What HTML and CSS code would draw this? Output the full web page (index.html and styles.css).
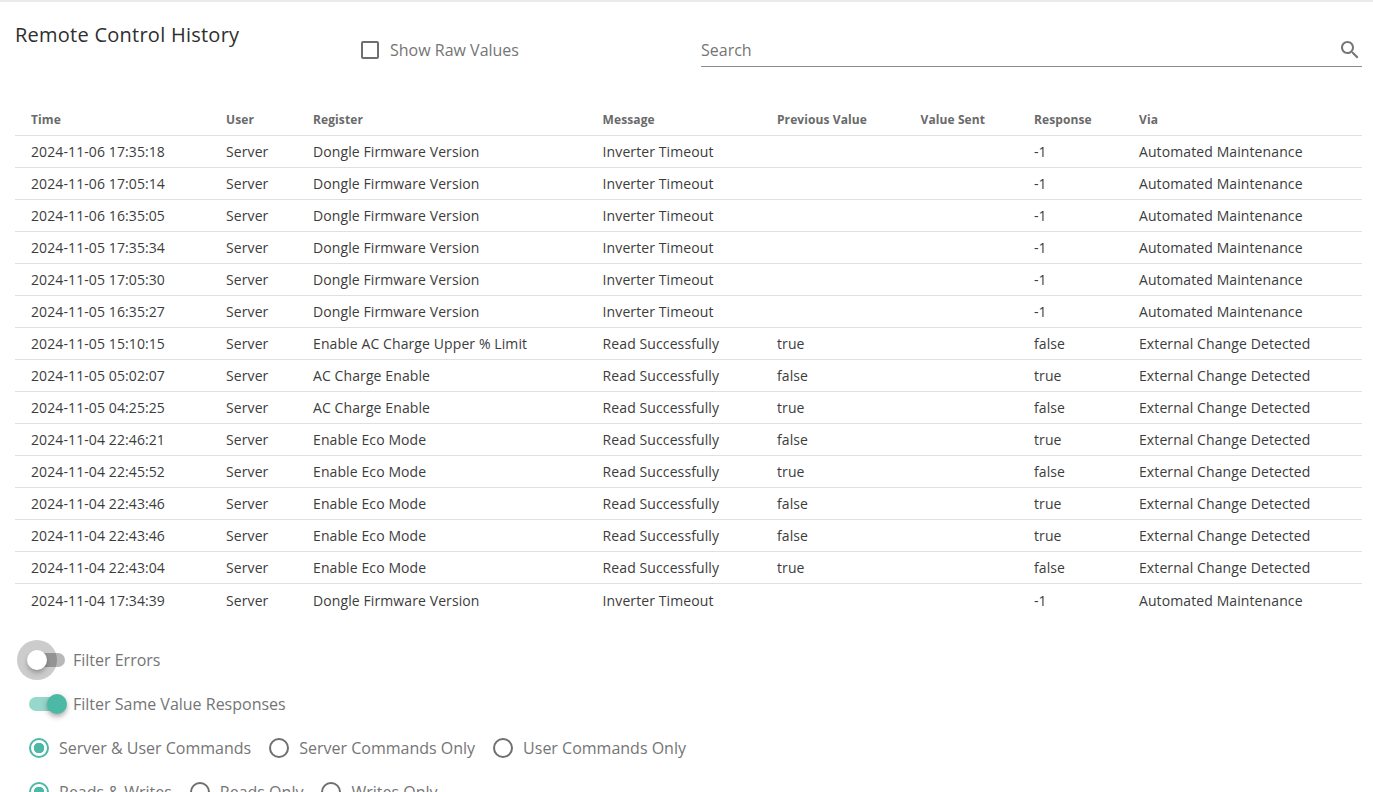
FILE: index.html
```html
<!DOCTYPE html>
<html lang="en">
  <head>
    <meta charset="UTF-8" />
    <meta name="viewport" content="width=device-width, initial-scale=1.0" />
    <title>Remote Control History</title>
    <link rel="stylesheet" href="styles.css">
  </head>
  <body>
    <div class="page">
      <div class="top-row">
        <h2 class="title">Remote Control History</h2>
        <label class="raw-values">
          <span class="checkbox"></span>
          Show Raw Values
        </label>
        <div class="search">
          <span>Search</span>
          <svg class="search-icon" viewBox="0 0 24 24" width="24" height="24">
            <path d="M15.5 14h-.79l-.28-.27C15.41 12.59 16 11.11 16 9.5 16 5.91 13.09 3 9.5 3S3 5.91 3 9.5 5.91 16 9.5 16c1.61 0 3.09-.59 4.23-1.57l.27.28v.79l5 4.99L20.49 19l-4.99-5zm-6 0C7.01 14 5 11.99 5 9.5S7.01 5 9.5 5 14 7.01 14 9.5 11.99 14 9.5 14z"/>
          </svg>
        </div>
      </div>

      <table class="history">
        <thead>
          <tr>
            <th class="col-time">Time</th>
            <th class="col-user">User</th>
            <th class="col-register">Register</th>
            <th class="col-message">Message</th>
            <th class="col-previous">Previous Value</th>
            <th class="col-sent">Value Sent</th>
            <th class="col-response">Response</th>
            <th>Via</th>
          </tr>
        </thead>
        <tbody>
          <tr><td>2024-11-06 17:35:18</td><td>Server</td><td>Dongle Firmware Version</td><td>Inverter Timeout</td><td></td><td></td><td>-1</td><td>Automated Maintenance</td></tr>
          <tr><td>2024-11-06 17:05:14</td><td>Server</td><td>Dongle Firmware Version</td><td>Inverter Timeout</td><td></td><td></td><td>-1</td><td>Automated Maintenance</td></tr>
          <tr><td>2024-11-06 16:35:05</td><td>Server</td><td>Dongle Firmware Version</td><td>Inverter Timeout</td><td></td><td></td><td>-1</td><td>Automated Maintenance</td></tr>
          <tr><td>2024-11-05 17:35:34</td><td>Server</td><td>Dongle Firmware Version</td><td>Inverter Timeout</td><td></td><td></td><td>-1</td><td>Automated Maintenance</td></tr>
          <tr><td>2024-11-05 17:05:30</td><td>Server</td><td>Dongle Firmware Version</td><td>Inverter Timeout</td><td></td><td></td><td>-1</td><td>Automated Maintenance</td></tr>
          <tr><td>2024-11-05 16:35:27</td><td>Server</td><td>Dongle Firmware Version</td><td>Inverter Timeout</td><td></td><td></td><td>-1</td><td>Automated Maintenance</td></tr>
          <tr><td>2024-11-05 15:10:15</td><td>Server</td><td>Enable AC Charge Upper % Limit</td><td>Read Successfully</td><td>true</td><td></td><td>false</td><td>External Change Detected</td></tr>
          <tr><td>2024-11-05 05:02:07</td><td>Server</td><td>AC Charge Enable</td><td>Read Successfully</td><td>false</td><td></td><td>true</td><td>External Change Detected</td></tr>
          <tr><td>2024-11-05 04:25:25</td><td>Server</td><td>AC Charge Enable</td><td>Read Successfully</td><td>true</td><td></td><td>false</td><td>External Change Detected</td></tr>
          <tr><td>2024-11-04 22:46:21</td><td>Server</td><td>Enable Eco Mode</td><td>Read Successfully</td><td>false</td><td></td><td>true</td><td>External Change Detected</td></tr>
          <tr><td>2024-11-04 22:45:52</td><td>Server</td><td>Enable Eco Mode</td><td>Read Successfully</td><td>true</td><td></td><td>false</td><td>External Change Detected</td></tr>
          <tr><td>2024-11-04 22:43:46</td><td>Server</td><td>Enable Eco Mode</td><td>Read Successfully</td><td>false</td><td></td><td>true</td><td>External Change Detected</td></tr>
          <tr><td>2024-11-04 22:43:46</td><td>Server</td><td>Enable Eco Mode</td><td>Read Successfully</td><td>false</td><td></td><td>true</td><td>External Change Detected</td></tr>
          <tr><td>2024-11-04 22:43:04</td><td>Server</td><td>Enable Eco Mode</td><td>Read Successfully</td><td>true</td><td></td><td>false</td><td>External Change Detected</td></tr>
          <tr class="last-row"><td>2024-11-04 17:34:39</td><td>Server</td><td>Dongle Firmware Version</td><td>Inverter Timeout</td><td></td><td></td><td>-1</td><td>Automated Maintenance</td></tr>
        </tbody>
      </table>

      <div class="filters">
        <label class="switch-row">
          <span class="switch">
            <span class="track"></span>
            <span class="thumb focused"></span>
          </span>
          Filter Errors
        </label>
        <label class="switch-row">
          <span class="switch on">
            <span class="track"></span>
            <span class="thumb"></span>
          </span>
          Filter Same Value Responses
        </label>
        <div class="radio-row">
          <label class="radio-item"><span class="radio checked"></span>Server &amp; User Commands</label>
          <label class="radio-item"><span class="radio"></span>Server Commands Only</label>
          <label class="radio-item"><span class="radio"></span>User Commands Only</label>
        </div>
        <div class="radio-row">
          <label class="radio-item"><span class="radio checked"></span>Reads &amp; Writes</label>
          <label class="radio-item"><span class="radio"></span>Reads Only</label>
          <label class="radio-item"><span class="radio"></span>Writes Only</label>
        </div>
      </div>
    </div>
  </body>
</html>
```

FILE: styles.css
```css
html,
body {
  height: 100%;
  margin: 0;
  overflow: hidden;
}
body {
  font-family: "Open Sans", Arial, sans-serif;
  background-color: #fff;
  color: #3c3c3c;
  font-size: 14px;
}
.page {
  border-top: 2px solid #e9eaee;
  padding: 0 11px 0 15px;
}
.top-row {
  display: flex;
  align-items: flex-start;
  height: 100px;
}
.title {
  width: 346px;
  margin: 19px 0 0;
  font-size: 20px;
  font-weight: 400;
  line-height: 27px;
  letter-spacing: 0.25px;
  color: #2f2f2f;
}
.raw-values {
  display: flex;
  align-items: center;
  width: 340px;
  height: 24px;
  margin-top: 36px;
  font-size: 16px;
  color: #757575;
}
.checkbox {
  width: 14px;
  height: 14px;
  margin-right: 11px;
  border: 2px solid #6f6f6f;
  border-radius: 2px;
}
.search {
  flex: 1;
  display: flex;
  justify-content: space-between;
  align-items: center;
  height: 32px;
  margin-top: 32px;
  border-bottom: 1px solid #8c8c8c;
  font-size: 16px;
  color: #757575;
}
.search-icon {
  fill: #757575;
}
.history {
  width: 100%;
  border-collapse: collapse;
  table-layout: fixed;
  margin-top: 1px;
}
.history th {
  box-sizing: border-box;
  height: 32px;
  padding: 2px 0 0 16px;
  text-align: left;
  font-size: 12px;
  font-weight: 700;
  letter-spacing: 0.1px;
  color: #6a6a6a;
  border-bottom: 1px solid #e0e0e0;
}
.history td {
  height: 31px;
  padding: 0 0 0 16px;
  white-space: nowrap;
  letter-spacing: 0.1px;
  border-bottom: 1px solid #e0e0e0;
}
.last-row td {
  height: 33px;
  border-bottom: none;
}
.col-time { width: 195px; }
.col-user { width: 87px; }
.col-register { width: 289.6px; }
.col-message { width: 174.4px; }
.col-previous { width: 143.5px; }
.col-sent { width: 113.5px; }
.col-response { width: 105px; }
.filters {
  padding-top: 21px;
  font-size: 16px;
  color: #757575;
}
.switch-row {
  display: flex;
  align-items: center;
  height: 44px;
}
.switch {
  position: relative;
  width: 36px;
  height: 14px;
  margin: 0 8px 0 14px;
}
.track {
  display: block;
  height: 14px;
  border-radius: 7px;
  background: #b8b8b8;
}
.thumb {
  position: absolute;
  left: -2px;
  top: -3px;
  width: 20px;
  height: 20px;
  border-radius: 50%;
  background: #fff;
  box-shadow: 0 2px 4px -1px rgba(0, 0, 0, 0.2), 0 4px 5px rgba(0, 0, 0, 0.14), 0 1px 10px rgba(0, 0, 0, 0.12);
}
.thumb.focused {
  box-shadow: 0 2px 4px -1px rgba(0, 0, 0, 0.2), 0 4px 5px rgba(0, 0, 0, 0.14), 0 0 0 10px rgba(0, 0, 0, 0.2);
}
.switch.on .track {
  background: #98d7cb;
}
.switch.on .thumb {
  left: 18px;
  background: #4cb9a6;
}
.radio-row {
  display: flex;
  align-items: center;
  gap: 18px;
  height: 44px;
  padding-left: 14px;
}
.radio-item {
  display: flex;
  align-items: center;
}
.radio {
  box-sizing: border-box;
  width: 20px;
  height: 20px;
  margin-right: 10px;
  border: 2px solid #6f6f6f;
  border-radius: 50%;
}
.radio.checked {
  border-color: #4cb9a6;
  background: radial-gradient(circle, #4cb9a6 5px, transparent 5.5px);
}
```
